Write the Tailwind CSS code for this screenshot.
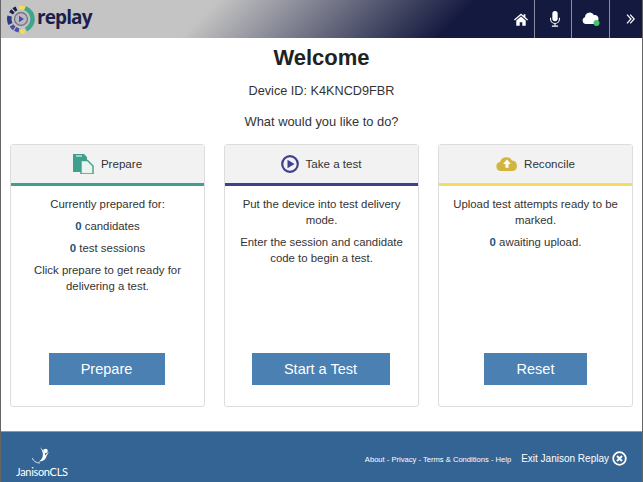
<!DOCTYPE html>
<html lang="en">
<head>
    <meta charset="UTF-8">
    <meta name="viewport" content="width=device-width, initial-scale=1.0">
    <title>Janison Replay</title>
    <script src="https://cdn.jsdelivr.net/npm/@tailwindcss/browser@4"></script>
</head>
<body class="bg-white h-[482px] w-[643px] overflow-hidden font-['Liberation_Sans',sans-serif] text-[#333]">
    <div class="flex flex-col h-[482px] border-l border-l-[#666] border-r border-r-[#666]">
        <!-- Header -->
        <header class="flex justify-between h-[38px] bg-[linear-gradient(135deg,#c4c4c4_32%,#14193f_70%)]">
            <div class="flex items-center pl-[5px] gap-[1px]">
                <svg class="w-[30px] h-[32px]" viewBox="0 0 30 32" fill="none">
                    <path d="M15 4.5A11.5 11.5 0 0 1 20 26.4" stroke="#3fa58c" stroke-width="4.5"/>
                    <path d="M13 4.6 A11.5 11.5 0 0 1 19 5.2" stroke="#f2da5a" stroke-width="4.5"/>
                    <path d="M10.5 5.5 A11.5 11.5 0 0 0 5 10.5" stroke="#1b1f4b" stroke-width="4.5" stroke-dasharray="3 1.2"/>
                    <path d="M3.6 13 A11.5 11.5 0 0 0 4.5 21" stroke="#2f3a86" stroke-width="4.5"/>
                    <path d="M5.5 22.5 A11.5 11.5 0 0 0 14 27.5" stroke="#4c4fa5" stroke-width="4.5" stroke-dasharray="4 1"/>
                    <circle cx="16.5" cy="28.5" r="2.6" fill="#f2da5a"/>
                    <circle cx="15" cy="16" r="6.5" fill="#b9b9c4" stroke="#77777f" stroke-width="1.4"/>
                    <path d="M13 12.8v6.4l5-3.2z" fill="#4c4fa5"/>
                </svg>
                <span class="font-['Open_Sans',sans-serif] font-bold text-[19px] leading-none tracking-[-0.9px] text-[#1b1f4b] pb-[3px]">replay</span>
            </div>
            <nav class="flex h-[38px]">
                <a class="flex items-center justify-center w-[37px] pl-[9px] border-r border-r-[#8a8d9c]">
                    <svg class="w-[14px] h-[13px]" viewBox="0 0 16 14" fill="#fff"><path d="M8 0 0 7l1 1 7-6 7 6 1-1-3-2.6V1h-2v1.6zM2.6 8.2V14h3.9v-4h3v4h3.9V8.2L8 3.5z"/></svg>
                </a>
                <a class="flex items-center justify-center w-[37px] pl-[3px] border-r border-r-[#8a8d9c]">
                    <svg class="w-[12px] h-[16px]" viewBox="0 0 12 18" fill="none"><rect x="3" y="0" width="6" height="11.5" rx="3" fill="#fff"/><path d="M1 7.5v1.5a5 5 0 0 0 10 0V7.5M6 14v2.5M2.5 17h7" stroke="#fff" stroke-width="1.2"/></svg>
                </a>
                <a class="flex items-center justify-center w-[38px] border-r border-r-[#8a8d9c]">
                    <svg class="w-[18px] h-[16px]" viewBox="0 0 18 15"><path d="M4 12.5a3.5 3.5 0 0 1-1-6.8A4.8 4.8 0 0 1 12 3.6a3.8 3.8 0 0 1 3.5 6.4L13 12.5z" fill="#fff"/><circle cx="14.5" cy="11.5" r="3" fill="#45c56b"/></svg>
                </a>
                <a class="flex items-center justify-center w-[32px] pl-[8px] text-white">
                    <svg class="w-[9px] h-[10px]" viewBox="0 0 9 10" fill="none" stroke="#fff" stroke-width="1.2"><path d="M1 .7 5 5 1 9.3M4.2 .7 8.2 5 4.2 9.3"/></svg>
                </a>
            </nav>
        </header>

        <!-- Main -->
        <main class="flex-1 flex flex-col">
            <h1 class="text-[22px] leading-[28px] font-bold text-[#222] text-center mt-[6px]">Welcome</h1>
            <p class="text-[12.7px] leading-[16px] text-center mt-[11px]">Device ID: K4KNCD9FBR</p>
            <p class="text-[12.9px] leading-[16px] text-center mt-[15px]">What would you like to do?</p>

            <div class="grid grid-cols-3 gap-[19px] px-[9px] mt-[14px] h-[263px]">
                <!-- Prepare -->
                <section class="flex flex-col border border-[#ddd] rounded-[3px] bg-white">
                    <div class="flex items-center justify-center gap-[7px] h-[41px] pb-[1px] bg-[#f2f2f2] border-b-[3px] border-b-[#3fa08b] text-[11.6px] font-medium">
                        <svg class="w-[21px] h-[20px]" viewBox="0 0 21 20"><path d="M0 0h11l3 3v15H0z" fill="#3fa08b"/><path d="M3 2h6" stroke="#fff" stroke-width="1"/><path d="M8 6.5h6.5L20 12v8H8z" fill="#e9f3f0" stroke="#3fa08b" stroke-width="1.4"/></svg>
                        <span>Prepare</span>
                    </div>
                    <div class="flex-1 flex flex-col items-center px-[14px] pt-[10px] text-[11.4px] leading-[16px] text-center">
                        <p class="mb-[6px]">Currently prepared for:</p>
                        <p class="mb-[6px]"><b class="text-[#20567f]">0</b> candidates</p>
                        <p class="mb-[6px]"><b class="text-[#20567f]">0</b> test sessions</p>
                        <p>Click prepare to get ready for delivering a test.</p>
                    </div>
                    <button class="self-center w-[116px] h-[32px] mb-[21px] mr-[2px] pt-[1px] bg-[#4b80b3] text-white text-[14.5px]">Prepare</button>
                </section>

                <!-- Take a test -->
                <section class="flex flex-col border border-[#ddd] rounded-[3px] bg-white">
                    <div class="flex items-center justify-center gap-[6px] h-[41px] pb-[1px] bg-[#f2f2f2] border-b-[3px] border-b-[#3f3f8f] text-[11.6px] font-medium">
                        <svg class="w-[18px] h-[18px]" viewBox="0 0 18 18"><circle cx="9" cy="9" r="7.8" fill="none" stroke="#3f3f8f" stroke-width="2.2"/><path d="M6.5 4.8v8.4L13.5 9z" fill="#3f3f8f"/></svg>
                        <span>Take a test</span>
                    </div>
                    <div class="flex-1 flex flex-col items-center px-[14px] pt-[10px] text-[11.4px] leading-[16px] text-center">
                        <p class="mb-[6px]">Put the device into test delivery mode.</p>
                        <p>Enter the session and candidate code to begin a test.</p>
                    </div>
                    <button class="self-center w-[138px] h-[32px] mb-[21px] mr-[2px] pt-[1px] bg-[#4b80b3] text-white text-[14.5px]">Start a Test</button>
                </section>

                <!-- Reconcile -->
                <section class="flex flex-col border border-[#ddd] rounded-[3px] bg-white">
                    <div class="flex items-center justify-center gap-[6px] h-[41px] pb-[1px] bg-[#f2f2f2] border-b-[3px] border-b-[#f6dc62] text-[11.6px] font-medium">
                        <svg class="w-[22px] h-[15px]" viewBox="0 0 22 15"><path d="M5 15a4.5 4.5 0 0 1-1-8.9A6.5 6.5 0 0 1 16 4.6 5.3 5.3 0 0 1 17 15z" fill="#d2b53d"/><path d="M11 3.5 7 8h2.4v3.8h3.2V8H15z" fill="#fff"/></svg>
                        <span>Reconcile</span>
                    </div>
                    <div class="flex-1 flex flex-col items-center px-[14px] pt-[10px] text-[11.4px] leading-[16px] text-center">
                        <p class="mb-[6px]">Upload test attempts ready to be marked.</p>
                        <p><b class="text-[#20567f]">0</b> awaiting upload.</p>
                    </div>
                    <button class="self-center w-[103px] h-[32px] mb-[21px] pt-[1px] bg-[#4b80b3] text-white text-[14.5px]">Reset</button>
                </section>
            </div>
        </main>

        <!-- Footer -->
        <footer class="flex items-center justify-between h-[51px] bg-[#336493] border-t border-t-[#7d9dbd] text-white pl-[15px] pr-[15px]">
            <div class="flex flex-col items-center pt-[11px]">
                <svg class="w-[22px] h-[20px] -mb-[1px] ml-[3px]" viewBox="0 0 22 20" fill="none"><circle cx="13.5" cy="4" r="2.3" fill="#fff"/><path d="M7.5 0c2 2 3.2 4.5 3.4 7 .2 3-1.2 6-4 7.5 4 .3 7-2 7.6-5.4L17 5c-2 1.2-3 2.5-3.6 3.5C12.8 5 10.5 2 7.5 0z" fill="#fff"/><path d="M0 11c1.5 3 4 5 8 5" stroke="#fff" stroke-width=".8"/></svg>
                <span class="font-['Lato',sans-serif] text-[11px] leading-[12px] tracking-[-0.3px]">JanisonCLS</span>
            </div>
            <div class="flex items-center gap-[10px] pt-[3px]">
                <span class="text-[7.6px] pt-[2px]">About - Privacy - Terms &amp; Conditions - Help</span>
                <span class="text-[10px] flex items-center gap-[3px]">Exit Janison Replay
                    <svg class="w-[15px] h-[15px]" viewBox="0 0 15 15"><circle cx="7.5" cy="7.5" r="6.3" fill="none" stroke="#fff" stroke-width="1.8"/><path d="M5 5l5 5M10 5l-5 5" stroke="#fff" stroke-width="2"/></svg>
                </span>
            </div>
        </footer>
    </div>
</body>
</html>
